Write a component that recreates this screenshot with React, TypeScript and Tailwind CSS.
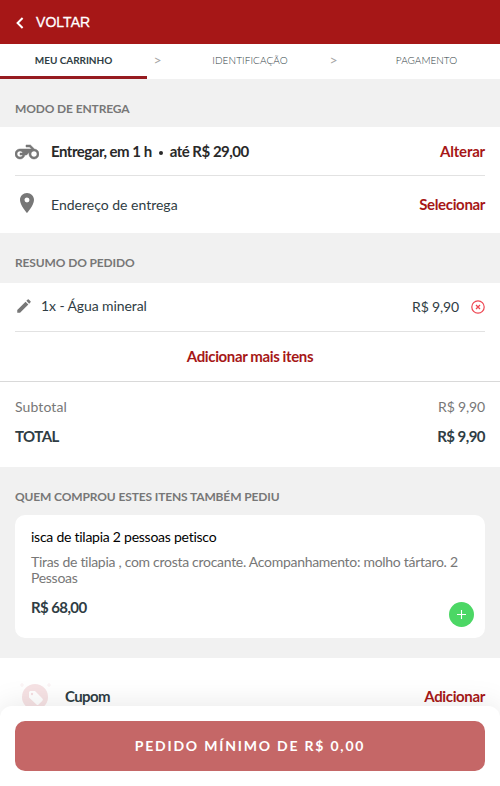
import type { ReactNode } from "react";
import { MdEdit, MdLocationOn } from "react-icons/md";

function SectionTitle({ children }: { children: ReactNode }) {
  return <h2 className="text-[12px] leading-[18px] font-bold tracking-[-0.13px] text-[#777777]">{children}</h2>;
}

function MotorcycleIcon() {
  return (
    <svg viewBox="0 0 24 24" className="mt-0.5 size-6 fill-[#777777] stroke-[#777777] [stroke-width:0.5]">
      <path d="M19.44 9.03L15.41 5H11v2h3.59l2 2H5c-2.8 0-5 2.2-5 5s2.2 5 5 5c2.46 0 4.45-1.69 4.9-4h1.65l2.77-2.77c-.21.54-.32 1.14-.32 1.77 0 2.8 2.2 5 5 5s5-2.2 5-5c0-2.65-1.97-4.77-4.56-4.97zM7.82 15C7.4 16.15 6.28 17 5 17c-1.63 0-3-1.37-3-3s1.37-3 3-3c1.28 0 2.4.85 2.82 2H5v2h2.82zM19 17c-1.66 0-3-1.34-3-3s1.34-3 3-3 3 1.34 3 3-1.34 3-3 3z" />
    </svg>
  );
}

function CouponIcon() {
  return (
    <svg viewBox="0 0 40 40" className="size-10">
      <circle cx="20" cy="20" r="13" fill="#f6e2e4" />
      <g stroke="#faf2f3" strokeWidth="1.2">
        <path d="M7 6v4M5 8h4M34 6v4M32 8h4" />
      </g>
      <path d="M14 15.5v5l7.5 7a1.5 1.5 0 0 0 2.1 0l3.8-3.8a1.5 1.5 0 0 0 0-2.1L20 14h-4.500a1.500 1.500 0 0 0-1.500 1.500z" fill="#fff" />
      <circle cx="17" cy="17" r="1.200" fill="#f6dfe2" />
    </svg>
  );
}

export default function App() {
  return (
    <div className="h-[786px] overflow-hidden bg-white font-['Lato',sans-serif] text-[14px] leading-5 text-[#2f3d44]">
      <header className="flex h-11 items-center bg-[#a61717] pl-[15px] text-white">
        <svg viewBox="0 0 10 12" className="mt-0.5 h-3 w-2.5 fill-none stroke-white stroke-2">
          <path d="M7.600 1L2.600 6l5 5" />
        </svg>
        <span className="ml-[11px] font-['Liberation_Sans',Arial,sans-serif] text-[14px] tracking-[0.05px] [-webkit-text-stroke:0.3px_white]">VOLTAR</span>
      </header>

      <nav className="flex h-[35px] text-[10px] font-light">
        <div className="flex w-[147px] items-center justify-center border-b-[3px] border-[#961b20] font-bold tracking-[-0.05px]">MEU CARRINHO</div>
        <div className="w-[21px] pt-1.5 text-center text-[14px] font-normal text-[#a6a6a6]">&gt;</div>
        <div className="flex w-[158px] items-center justify-center pb-[3px] pl-1.5 tracking-[0.08px]">IDENTIFICAÇÃO</div>
        <div className="w-[15px] pt-1.5 text-center text-[14px] font-normal text-[#a6a6a6]">&gt;</div>
        <div className="ml-auto flex w-[147px] items-center justify-center pb-[3px]">PAGAMENTO</div>
      </nav>

      <div className="h-12 bg-[#f1f1f1] px-[15px] pt-[21px]"><SectionTitle>MODO DE ENTREGA</SectionTitle></div>
      <section className="h-[106px] px-[15px]">
        <div className="flex h-[49px] items-center border-b border-[#e2e2e2] text-[15px] font-bold">
          <MotorcycleIcon />
          <span className="ml-3 flex items-center whitespace-nowrap tracking-[-0.49px] text-[#292929]">
            Entregar, em 1 h
            <i className="mx-[7px] mt-1 size-1 rounded-full bg-current" />
            até R$ 29,00
          </span>
          <span className="ml-auto tracking-[-0.2px] text-[#a61717]">Alterar</span>
        </div>
        <div className="flex h-[57px] items-center">
          <MdLocationOn className="mb-1 size-6 text-[#777777]" />
          <span className="ml-3">Endereço de entrega</span>
          <span className="mb-0.5 ml-auto text-[15px] font-bold tracking-[-0.35px] text-[#a61717]">Selecionar</span>
        </div>
      </section>

      <div className="h-[50px] bg-[#f1f1f1] px-[15px] pt-[21px]"><SectionTitle>RESUMO DO PEDIDO</SectionTitle></div>
      <section className="h-[184px]">
        <div className="mx-[15px] flex h-[49px] items-center border-b border-[#e2e2e2]">
          <MdEdit className="mb-0.5 size-[18px] text-[#777777]" />
          <span className="mb-0.5 ml-2 tracking-[-0.1px]">1x - Água mineral</span>
          <span className="ml-auto tracking-[-0.15px]">R$ 9,90</span>
          <svg viewBox="0 0 14 14" className="ml-3 size-3.5 fill-none stroke-[#ee4652]">
            <circle cx="7" cy="7" r="6.200" strokeWidth="1.200" />
            <path d="M5 5l4 4M9 5l-4 4" strokeWidth="1.300" />
          </svg>
        </div>
        <div className="flex h-[50px] items-center justify-center border-b border-[#d9d9d9] pb-0.5 text-[15px] font-bold tracking-[-0.38px] text-[#a61717]">Adicionar mais itens</div>
        <div className="px-[15px] pt-[15px]">
          <div className="flex justify-between text-[#777777]"><span className="tracking-[0.1px]">Subtotal</span><span className="tracking-[-0.15px]">R$ 9,90</span></div>
          <div className="mt-[9px] flex justify-between text-[15px] font-bold tracking-[-0.55px]"><span>TOTAL</span><span>R$ 9,90</span></div>
        </div>
      </section>

      <section className="h-[191px] bg-[#f1f1f1] px-[15px] pt-[21px]">
        <SectionTitle>QUEM COMPROU ESTES ITENS TAMBÉM PEDIU</SectionTitle>
        <article className="relative mt-[9px] h-[123px] rounded-[10px] bg-white px-4 pt-3">
          <h3 className="tracking-[-0.25px] text-black">isca de tilapia 2 pessoas petisco</h3>
          <p className="mt-[7px] text-[14px] leading-4 tracking-[-0.29px] text-[#777777]">Tiras de tilapia , com crosta crocante. Acompanhamento: molho tártaro. 2 Pessoas</p>
          <strong className="mt-[11px] block text-[15px] font-bold tracking-[-0.6px]">R$ 68,00</strong>
          <button className="absolute right-[11px] bottom-[11px] flex size-[25px] items-center justify-center rounded-full bg-[#4cd765]" aria-label="Adicionar isca de tilapia">
            <svg viewBox="0 0 9 9" className="size-[9px] stroke-white"><path d="M4.500 0v9M0 4.500h9" strokeWidth="1.100" /></svg>
          </button>
        </article>
      </section>

      <div className="flex h-[77px] items-center px-[15px] text-[15px] font-bold">
        <CouponIcon />
        <span className="mb-0.5 ml-2.5 tracking-[-0.6px]">Cupom</span>
        <span className="mb-0.5 ml-auto tracking-[-0.35px] text-[#a61717]">Adicionar</span>
      </div>

      <footer className="fixed inset-x-0 bottom-0 h-20 rounded-t-[12px] bg-white px-[15px] pt-[15px] shadow-[0_0_30px_rgba(0,0,0,0.1)]">
        <button className="flex h-[50px] w-full items-center justify-center rounded-[10px] bg-[#c56767] text-[14px] font-bold tracking-[1.8px] text-white">PEDIDO MÍNIMO DE R$ 0,00</button>
      </footer>
    </div>
  );
}
